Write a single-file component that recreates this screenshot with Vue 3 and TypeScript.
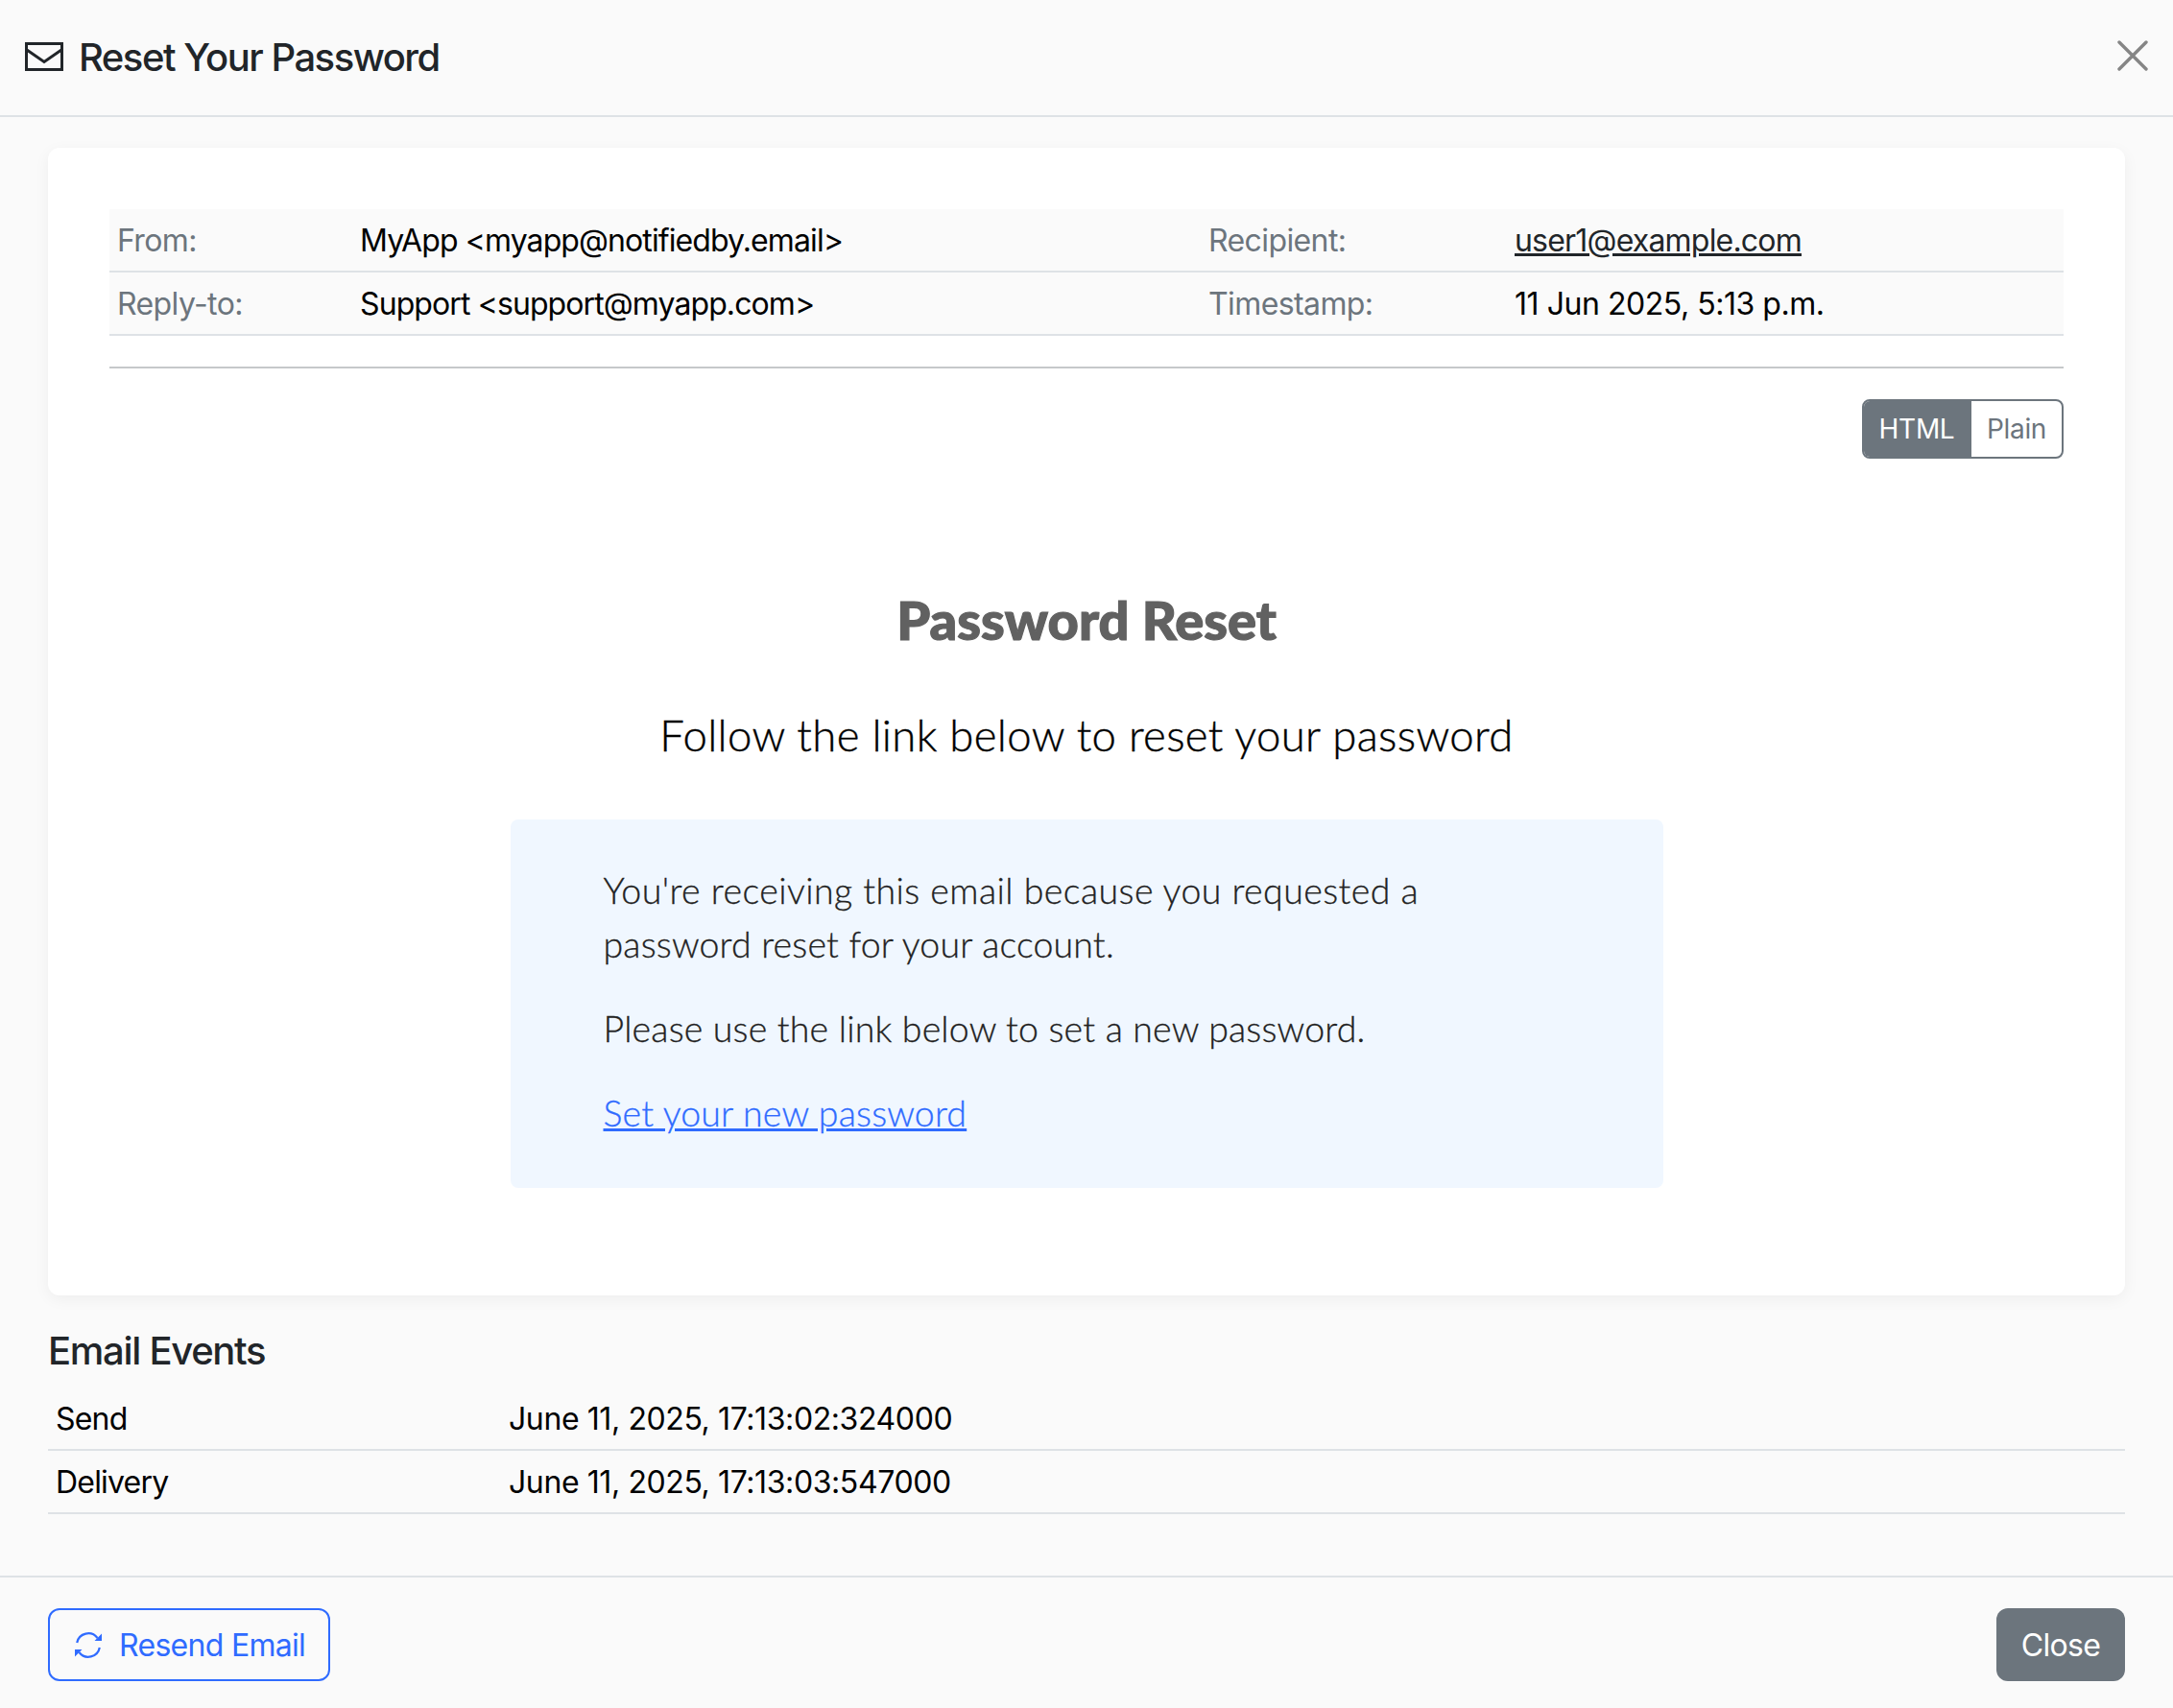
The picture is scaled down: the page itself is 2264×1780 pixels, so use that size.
<script setup lang="ts">
interface MetaRow { label: string; value: string; label2: string; value2: string; link?: boolean }
const rows: MetaRow[] = [
  { label: 'From:', value: 'MyApp <myapp@notifiedby.email>', label2: 'Recipient:', value2: 'user1@example.com', link: true },
  { label: 'Reply-to:', value: 'Support <support@myapp.com>', label2: 'Timestamp:', value2: '11 Jun 2025, 5:13 p.m.' },
]
const events = [
  { name: 'Send', time: 'June 11, 2025, 17:13:02:324000' },
  { name: 'Delivery', time: 'June 11, 2025, 17:13:03:547000' },
]
</script>

<template>
  <div class="modal">
    <header class="head">
      <svg class="env" viewBox="0 0 40 30" fill="none" stroke="currentColor" stroke-width="3">
        <rect x="1.5" y="1.5" width="37" height="27" />
        <path d="M2 8l18 12.5L38 8" />
      </svg>
      <h1 class="title">Reset Your Password</h1>
      <svg class="x" viewBox="0 0 32 32" stroke="#858585" stroke-width="3.4" stroke-linecap="round">
        <path d="M2 2l28 28M30 2L2 30" />
      </svg>
    </header>

    <main class="body">
      <section class="card">
        <div class="meta">
          <div v-for="r in rows" :key="r.label" class="meta-row">
            <span class="lbl">{{ r.label }}</span>
            <span class="val addr">{{ r.value }}</span>
            <span class="lbl">{{ r.label2 }}</span>
            <a v-if="r.link" class="val ulink">{{ r.value2 }}</a>
            <span v-else class="val">{{ r.value2 }}</span>
          </div>
        </div>
        <hr class="rule" />
        <div class="toggle-row">
          <div class="toggle">
            <span class="tog active">HTML</span>
            <span class="tog">Plain</span>
          </div>
        </div>
        <div class="mail">
          <h2 class="mail-h">Password Reset</h2>
          <p class="mail-sub">Follow the link below to reset your password</p>
          <div class="box">
            <p class="box-p first"><span class="line-wide">You're receiving this email because you requested a</span><br />password reset for your account.</p>
            <p class="box-p">Please use the link below to set a new password.</p>
            <p class="box-p"><a class="setlink">Set your new password</a></p>
          </div>
        </div>
      </section>

      <h3 class="ev-h">Email Events</h3>
      <div class="ev-list">
        <div v-for="e in events" :key="e.name" class="ev-row">
          <span class="ev-name">{{ e.name }}</span>
          <span>{{ e.time }}</span>
        </div>
      </div>
    </main>

    <footer class="foot">
      <button class="btn outline">
        <svg class="sync" viewBox="0 0 28 27">
          <path d="M2.2 11A12 12 0 0 1 23.5 6M25.8 16A12 12 0 0 1 4.5 21" fill="none" stroke="currentColor" stroke-width="2.2" />
          <path d="M28 1.5v7.5h-7.5zM0 25.5v-7.5h7.5z" fill="currentColor" />
        </svg>
        Resend Email
      </button>
      <button class="btn solid">Close</button>
    </footer>
  </div>
</template>

<style>
html, body { margin: 0; background: #fafafa; }
</style>

<style scoped>
.modal {
  width: 2264px;
  height: 1780px;
  display: flex;
  flex-direction: column;
  background: #fafafa;
  color: #212529;
  font-family: Inter, "Liberation Sans", sans-serif;
  font-size: 32px;
  letter-spacing: -0.4px;
  box-sizing: border-box;
}
.head {
  height: 122px;
  box-sizing: border-box;
  border-bottom: 2px solid #dee2e6;
  display: flex;
  align-items: center;
  padding: 0 26px;
  flex: none;
}
.env { width: 40px; height: 30px; margin-right: 16px; margin-top: -2px; }
.title { margin: 0; font-size: 40px; font-weight: 500; letter-spacing: -1.5px; line-height: 1.2; flex: 1; }
.x { width: 32px; height: 32px; margin-top: -4px; }
.body { flex: 1; padding: 32px 50px 0; }
.card {
  background: #fff;
  border-radius: 12px;
  box-shadow: 0 4px 16px rgba(0, 0, 0, 0.05);
  padding: 64px 64px 0;
  height: 1196px;
  box-sizing: border-box;
}
.meta-row {
  display: grid;
  grid-template-columns: 253px 884px 319px 1fr;
  height: 66px;
  box-sizing: border-box;
  align-items: center;
  background: #fafafa;
  border-bottom: 2px solid #dee2e6;
  padding-left: 8px;
}
.lbl { color: #6c757d; letter-spacing: -0.6px; }
.val { color: #000; letter-spacing: -0.46px; }
.addr { letter-spacing: -0.9px; }
.ulink { color: #212529; text-decoration: underline; letter-spacing: -0.8px; }
.rule { margin: 32px 0 0; border: 0; height: 2px; background: #c6c8ca; }
.toggle-row { display: flex; justify-content: flex-end; margin-top: 32px; }
.toggle {
  display: flex;
  height: 62px;
  width: 210px;
  box-sizing: border-box;
  border: 2px solid #6c757d;
  border-radius: 8px;
  overflow: hidden;
  font-size: 28px;
  letter-spacing: -0.3px;
  color: #6c757d;
}
.tog { display: flex; align-items: center; justify-content: center; flex: 1; }
.tog.active { background: #6c757d; color: #fff; flex: none; width: 112px; padding-right: 2px; box-sizing: border-box; }
.mail { font-family: Lato, "Open Sans", sans-serif; text-align: center; letter-spacing: 0; }
.mail-h {
  margin: 137px 0 0;
  font-size: 56px;
  font-weight: 900;
  color: #616161;
  line-height: 62px;
  -webkit-text-stroke: 1.2px #616161;
}
.mail-sub {
  margin: 58px 0 0;
  font-size: 45.5px;
  font-weight: 300;
  color: #000;
  line-height: 62px;
  letter-spacing: 0.35px;
  -webkit-text-stroke: 0.4px #000;
}
.box {
  margin: 57px auto 0;
  width: 1201px;
  height: 384px;
  box-sizing: border-box;
  background: #f0f7ff;
  border-radius: 8px;
  padding: 46px 97px;
  text-align: left;
  color: #222;
  font-size: 37.5px;
  font-weight: 300;
  letter-spacing: 0.17px;
  line-height: 56px;
  -webkit-text-stroke: 0.3px;
}
.box-p { margin: 32px 0 0; }
.box-p.first { margin: 0; }
.line-wide { letter-spacing: 0.44px; }
.setlink { color: #2f6bff; text-decoration: underline; }
.ev-h { margin: 34px 0 0; font-size: 40px; font-weight: 500; letter-spacing: -1.3px; line-height: 48px; }
.ev-list { margin-top: 14px; color: #000; }
.ev-row {
  display: flex;
  height: 66px;
  box-sizing: border-box;
  align-items: center;
  padding-left: 8px;
  border-bottom: 2px solid #dee2e6;
}
.ev-name { width: 472px; letter-spacing: -0.8px; }
.foot {
  height: 138px;
  box-sizing: border-box;
  border-top: 2px solid #dee2e6;
  display: flex;
  justify-content: space-between;
  padding: 32px 50px 0;
  flex: none;
}
.btn {
  height: 76px;
  box-sizing: border-box;
  border-radius: 12px;
  font: inherit;
  letter-spacing: -0.7px;
  display: flex;
  align-items: center;
  justify-content: center;
}
.outline {
  width: 294px;
  background: transparent;
  border: 2px solid #2f6bff;
  color: #2f6bff;
  justify-content: flex-start;
  padding: 0 0 0 26px;
  gap: 18px;
}
.sync { width: 28px; height: 27px; flex: none; }
.solid { width: 134px; background: #6c757d; border: 0; color: #fff; }
</style>
